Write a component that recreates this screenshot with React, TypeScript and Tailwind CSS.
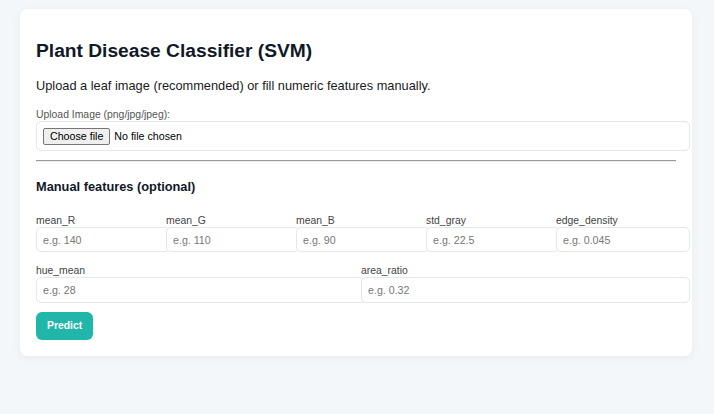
const FEATURES = [
  { name: "mean_R", ph: "e.g. 140" },
  { name: "mean_G", ph: "e.g. 110" },
  { name: "mean_B", ph: "e.g. 90" },
  { name: "std_gray", ph: "e.g. 22.5" },
  { name: "edge_density", ph: "e.g. 0.045" },
];

const EXTRA = [
  { name: "hue_mean", ph: "e.g. 28" },
  { name: "area_ratio", ph: "e.g. 0.32" },
];

function Field({ name, ph, tall }: { name: string; ph: string; tall?: boolean }) {
  return (
    <div className="min-w-0">
      <label className="block text-[10.4px] leading-[12px] text-[#444]">{name}</label>
      <input
        placeholder={ph}
        className={`box-content block w-full rounded-[5px] border border-[#e3e8ea] bg-white px-[6px] text-[10.67px] text-[#333] outline-none placeholder:text-[#777] ${
          tall ? "h-[24px]" : "h-[23px]"
        }`}
      />
    </div>
  );
}

export default function App() {
  return (
    <div
      className="min-h-[414px] bg-[#f4f7fa] px-5 pt-[9px]"
      style={{ fontFamily: '"Liberation Sans", Arial, sans-serif' }}
    >
      <div className="w-[672px] rounded-lg bg-white p-4 shadow-[0_2px_10px_rgba(0,0,0,0.05)]">
        <h1 className="mt-[15px] text-[19.2px] font-bold leading-[22px] text-[#111827]">
          Plant Disease Classifier (SVM)
        </h1>
        <p className="mt-[16px] text-[12.8px] leading-[15px] text-[#1a1a1a]">
          Upload a leaf image (recommended) or fill numeric features manually.
        </p>

        <label className="mt-[16px] block text-[10.4px] leading-[12px] text-[#555]">
          Upload Image (png/jpg/jpeg):
        </label>
        {/* file picker, drawn like chrome's native one */}
        <div className="box-content flex h-[28px] w-full items-center rounded-[5px] border border-[#e3e8ea] px-[6px]">
          <span className="mr-[4px] h-[17px] rounded-[2px] border border-[#767676] bg-[#efefef] px-[6px] text-[10.67px] leading-[15px] text-black">
            Choose file
          </span>
          <span className="text-[10.67px] text-black">No file chosen</span>
        </div>

        <hr className="mt-[9px] border-t border-b border-t-[#9a9a9a] border-b-[#eeeeee]" />

        <h3 className="mt-[17px] text-[12.8px] font-bold leading-[15px] text-[#111827]">
          Manual features (optional)
        </h3>

        <div className="mt-[21px] grid grid-cols-5 gap-x-[10px]">
          {FEATURES.map((f) => (
            <Field key={f.name} {...f} />
          ))}
        </div>

        <div className="mt-[13px] grid grid-cols-2 gap-x-[10px]">
          {EXTRA.map((f) => (
            <Field key={f.name} {...f} tall />
          ))}
        </div>

        <button className="mt-[9px] h-[28px] rounded-[6px] bg-[#20b6aa] px-[11px] text-[10.4px] font-bold text-white">
          Predict
        </button>
      </div>
    </div>
  );
}
